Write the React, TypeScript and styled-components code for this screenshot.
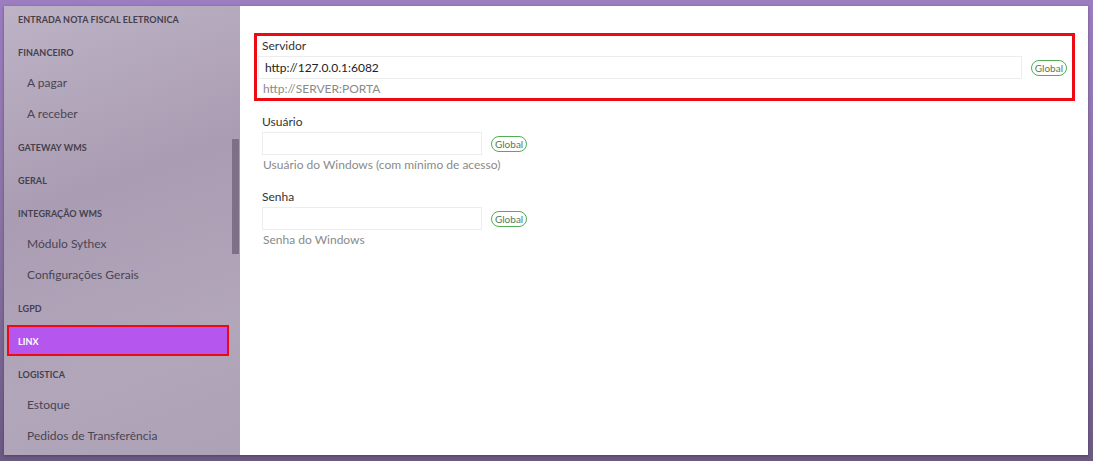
import React from "react";
import styled, { createGlobalStyle } from "styled-components";

const GlobalStyle = createGlobalStyle`
  html, body {
    margin: 0;
    padding: 0;
    height: 100%;
  }
  body {
    font-family: "Lato", "Open Sans", sans-serif;
    overflow: hidden;
  }
`;

const Frame = styled.div`
  height: 461px;
  box-sizing: border-box;
  padding: 6px 5px 6px 4px;
  background: linear-gradient(180deg, #9c7dc0 0%, #8a73a4 50%, #6b5a82 100%);
`;

const Window = styled.div`
  display: flex;
  height: 100%;
  box-shadow: 0 1px 3px rgba(40, 20, 60, 0.4);
`;

const Sidebar = styled.nav`
  position: relative;
  width: 236px;
  flex-shrink: 0;
  overflow: hidden;
  background: linear-gradient(160deg, #bdb2c6 0%, #aa9db3 40%, #b2a6bb 75%, #ada1b6 100%);
`;

const MenuList = styled.ul`
  list-style: none;
  margin: -5px 0 0 0;
  padding: 0;
`;

const HeaderItem = styled.li<{ $active?: boolean }>`
  display: flex;
  align-items: center;
  box-sizing: border-box;
  height: ${(p) => (p.$active ? "31px" : "33px")};
  margin: ${(p) => (p.$active ? "2px 11px 0 3px" : "0")};
  padding: ${(p) => (p.$active ? "2px 0 0 9px" : "3px 0 0 14px")};
  font-size: 9px;
  font-weight: 700;
  letter-spacing: 0.1px;
  text-transform: uppercase;
  color: ${(p) => (p.$active ? "#ffffff" : "#45404c")};
  background: ${(p) => (p.$active ? "#b557ee" : "transparent")};
  border: ${(p) => (p.$active ? "2px solid #ee0a12" : "none")};
`;

const SubItem = styled.li`
  display: flex;
  align-items: center;
  height: 31px;
  padding-left: 23px;
  font-size: 12px;
  color: #4a4452;
`;

const ScrollThumb = styled.div`
  position: absolute;
  right: 1px;
  top: 133px;
  width: 7px;
  height: 115px;
  background: #7d7188;
`;

const Main = styled.main`
  flex: 1;
  background: #ffffff;
  padding: 28px 13px 0 14px;
  display: flex;
  flex-direction: column;
  gap: 14px;
`;

const Field = styled.div<{ $highlight?: boolean }>`
  display: flex;
  flex-direction: column;
  gap: 1px;
  padding: ${(p) => (p.$highlight ? "0 5px 0 1px" : "0 0 0 8px")};
  border: ${(p) => (p.$highlight ? "3px solid #ee0a12" : "none")};
  margin-top: ${(p) => (p.$highlight ? "-1px" : "0")};
  margin-bottom: ${(p) => (p.$highlight ? "-2px" : "0")};
`;

const Label = styled.label<{ $indent?: boolean }>`
  font-size: 12px;
  line-height: 18px;
  color: #333333;
  padding-top: ${(p) => (p.$indent ? "1px" : "0")};
  padding-left: ${(p) => (p.$indent ? "4px" : "0")};
`;

const InputRow = styled.div`
  display: flex;
  align-items: center;
  gap: 9px;
`;

const TextInput = styled.input<{ $wide?: boolean }>`
  box-sizing: border-box;
  height: 23px;
  width: ${(p) => (p.$wide ? "auto" : "220px")};
  flex: ${(p) => (p.$wide ? "1" : "none")};
  border: 1px solid #ededed;
  padding: 0 6px;
  font-family: inherit;
  font-size: 12px;
  color: #222222;
  outline: none;
`;

const GlobalBadge = styled.span`
  box-sizing: border-box;
  display: inline-flex;
  align-items: center;
  justify-content: center;
  height: 16px;
  padding: 0 3px;
  border: 1.5px solid #52ad55;
  border-radius: 8px;
  font-size: 10px;
  color: #557a57;
`;

const Hint = styled.div<{ $indent?: boolean }>`
  font-size: 12px;
  line-height: 18px;
  color: #8a8a8a;
  padding-left: ${(p) => (p.$indent ? "5px" : "1px")};
`;

type MenuEntry = { label: string; sub?: boolean; active?: boolean };

const menu: MenuEntry[] = [
  { label: "Entrada nota fiscal eletronica" },
  { label: "Financeiro" },
  { label: "A pagar", sub: true },
  { label: "A receber", sub: true },
  { label: "Gateway WMS" },
  { label: "Geral" },
  { label: "Integração WMS" },
  { label: "Módulo Sythex", sub: true },
  { label: "Configurações Gerais", sub: true },
  { label: "LGPD" },
  { label: "Linx", active: true },
  { label: "Logistica" },
  { label: "Estoque", sub: true },
  { label: "Pedidos de Transferência", sub: true },
];

export default function App() {
  return (
    <>
      <GlobalStyle />
      <Frame>
        <Window>
          <Sidebar>
            <MenuList>
              {menu.map((m) =>
                m.sub ? (
                  <SubItem key={m.label}>{m.label}</SubItem>
                ) : (
                  <HeaderItem key={m.label} $active={m.active}>
                    {m.label}
                  </HeaderItem>
                )
              )}
            </MenuList>
            <ScrollThumb />
          </Sidebar>
          <Main>
            <Field $highlight>
              <Label $indent>Servidor</Label>
              <InputRow>
                <TextInput $wide defaultValue="http://127.0.0.1:6082" />
                <GlobalBadge>Global</GlobalBadge>
              </InputRow>
              <Hint $indent>http://SERVER:PORTA</Hint>
            </Field>
            <Field>
              <Label>Usuário</Label>
              <InputRow>
                <TextInput />
                <GlobalBadge>Global</GlobalBadge>
              </InputRow>
              <Hint>Usuário do Windows (com mínimo de acesso)</Hint>
            </Field>
            <Field>
              <Label>Senha</Label>
              <InputRow>
                <TextInput type="password" />
                <GlobalBadge>Global</GlobalBadge>
              </InputRow>
              <Hint>Senha do Windows</Hint>
            </Field>
          </Main>
        </Window>
      </Frame>
    </>
  );
}
